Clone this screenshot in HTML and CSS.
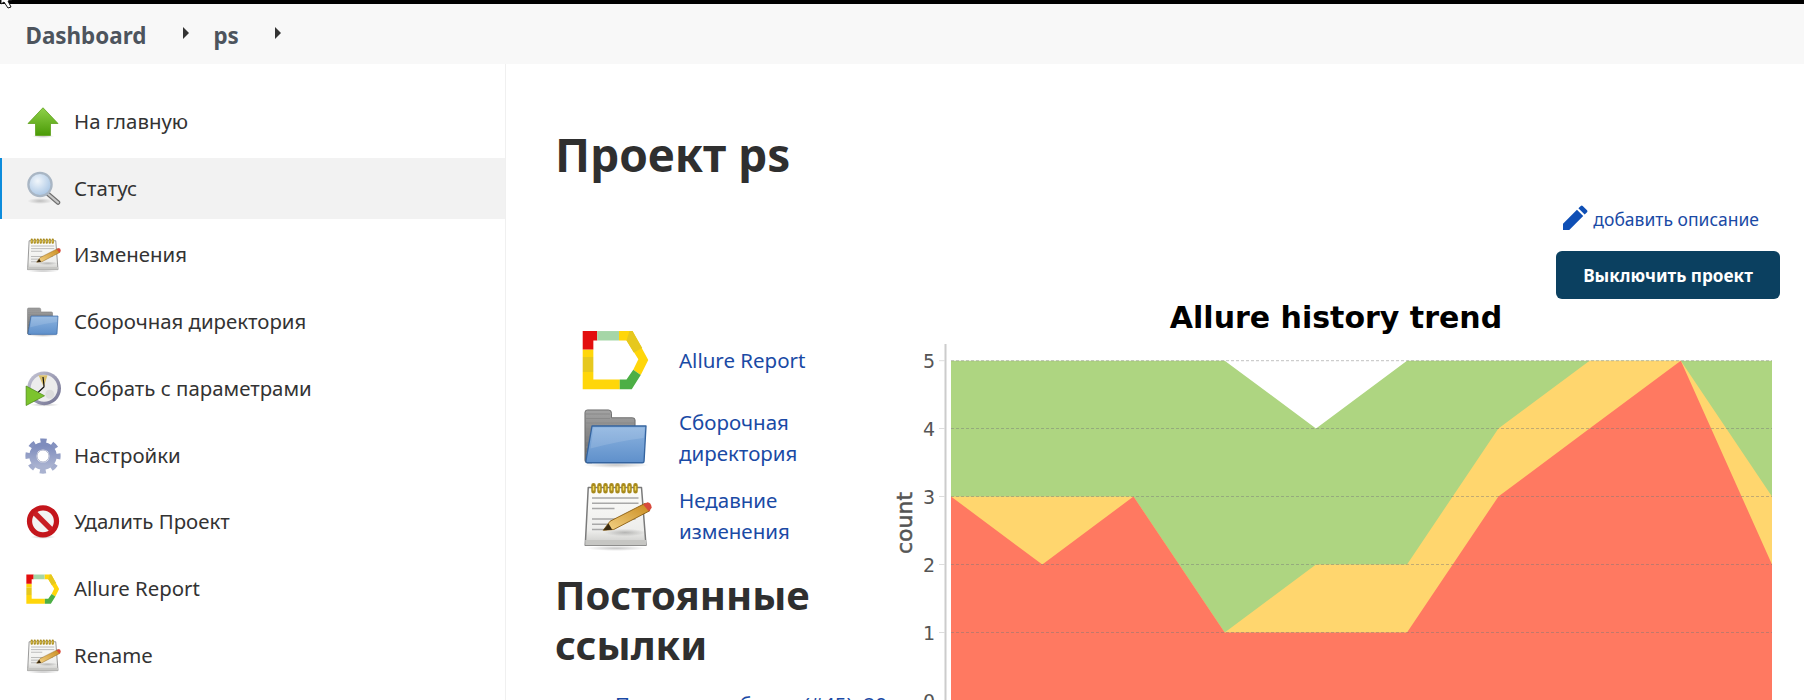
FILE: index.html
```html
<!DOCTYPE html>
<html lang="ru">
<head>
<meta charset="utf-8">
<title>Проект ps</title>
<link rel="stylesheet" href="styles.css">
</head>
<body>
<svg class="sprite" aria-hidden="true">
  <defs>
    <linearGradient id="g-arrow" x1="0" y1="0" x2="0" y2="1"><stop offset="0" stop-color="#8fd14a"/><stop offset="1" stop-color="#4a9a06"/></linearGradient>
    <linearGradient id="g-paper" x1="0" y1="0" x2="0" y2="1"><stop offset="0" stop-color="#fdfdfb"/><stop offset=".75" stop-color="#ededeb"/><stop offset="1" stop-color="#c9c9c6"/></linearGradient>
    <linearGradient id="g-pencil" x1="0" y1="1" x2="1" y2="0"><stop offset="0" stop-color="#f4d58a"/><stop offset="1" stop-color="#c98a1c"/></linearGradient>
    <linearGradient id="g-folder" x1="0" y1="0" x2="0" y2="1"><stop offset="0" stop-color="#8db4e0"/><stop offset="1" stop-color="#5f90cb"/></linearGradient>
    <linearGradient id="g-back" x1="0" y1="0" x2="0" y2="1"><stop offset="0" stop-color="#a3a3a3"/><stop offset="1" stop-color="#666"/></linearGradient>
    <radialGradient id="g-lens" cx=".4" cy=".35" r=".7"><stop offset="0" stop-color="#f1f6fb"/><stop offset="1" stop-color="#a5c3e3"/></radialGradient>
    <linearGradient id="g-clock" x1="0" y1="0" x2="1" y2="1"><stop offset="0" stop-color="#c9c9d8"/><stop offset="1" stop-color="#6e6e8e"/></linearGradient>
    <linearGradient id="g-gear" x1="0" y1="0" x2="0" y2="1"><stop offset="0" stop-color="#7f8dbd"/><stop offset="1" stop-color="#a9b2d0"/></linearGradient>
    <radialGradient id="g-shadow"><stop offset="0" stop-color="#000" stop-opacity=".22"/><stop offset="1" stop-color="#000" stop-opacity="0"/></radialGradient>

    <symbol id="i-up" viewBox="0 0 48 48">
      <ellipse cx="24" cy="43" rx="15" ry="2.5" fill="url(#g-shadow)"/>
      <path d="M24 5 44 26H34V42H14V26H4Z" fill="url(#g-arrow)" stroke="#5a9e14" stroke-width="1"/>
    </symbol>
    <symbol id="i-search" viewBox="0 0 48 48">
      <ellipse cx="20" cy="40" rx="17" ry="4" fill="url(#g-shadow)"/>
      <path d="M30 30 44 42" stroke="#6f6f6f" stroke-width="6" stroke-linecap="round"/>
      <path d="M30 30 44 42" stroke="#c8c8c8" stroke-width="3" stroke-linecap="round"/>
      <circle cx="20" cy="18" r="15.5" fill="url(#g-lens)" stroke="#a9b6c4" stroke-width="3"/>
    </symbol>
    <symbol id="i-notes" viewBox="0 0 48 48">
      <ellipse cx="24" cy="45.500" rx="20" ry="1.800" fill="url(#g-shadow)"/>
      <path d="M5.500 5H41L44 43.500H3.500Z" fill="url(#g-paper)" stroke="#7a7a7a" stroke-linejoin="round"/>
      <path d="M3.500 40H44V43.500H3.500Z" fill="#c6c6c3"/>
      <path d="M9 3.500V7.500M13 3.500V7.500M17 3.500V7.500M21 3.500V7.500M25 3.500V7.500M29 3.500V7.500M33 3.500V7.500M37 3.500V7.500" stroke="#a88a1c" stroke-width="3" stroke-linecap="round"/>
      <path d="M9 4V7M13 4V7M17 4V7M21 4V7M25 4V7M29 4V7M33 4V7M37 4V7" stroke="#f0d85a" stroke-width="1"/>
      <path d="M8 12H39M8 15.500H39M8 19H23M8 26H37M8 29.500H28M8 33H18" stroke="#a8a8a8" stroke-width="1"/>
      <ellipse cx="30" cy="35" rx="14" ry="2.500" fill="url(#g-shadow)"/>
      <path d="M15.500 33.500 20 27.500 43.500 15.500 46.500 20.500 22.500 33Z" fill="url(#g-pencil)" stroke="#8a5c10" stroke-width=".6"/>
      <path d="M15.500 33.500 19 29 21.500 33.200Z" fill="#3a2b12"/>
      <path d="M42 16.300 45 14.800Q47.500 15 47.800 18.500L46 21Z" fill="#d84a3c"/>
    </symbol>
    <symbol id="i-folder" viewBox="0 0 48 48">
      <ellipse cx="24" cy="42" rx="22" ry="2" fill="url(#g-shadow)"/>
      <path d="M3.300 7Q3.300 5.300 5 5.300H19Q21 5.300 21 7.500V10.500H35Q36.700 10.500 36.700 12V20H8V40.500H5Q3.300 40.500 3.300 39Z" fill="url(#g-back)" stroke="#666" stroke-width=".6"/>
      <path d="M4 8H20M4 11H20M4 14H36M4 18H36M4 22H7M4 26H7M4 30H6M4 34H6" stroke="#8a8a8a" stroke-width=".7" fill="none"/>
      <path d="M8 16H44L42.700 39.500Q42.700 40.500 41.500 40.500H5Q3.800 40.500 4 39Z" fill="url(#g-folder)" stroke="#35649f" stroke-width=".9" stroke-linejoin="round"/>
      <path d="M9 17.200H43L42.500 24Q26 26 7 31Z" fill="#fff" opacity=".13"/>
    </symbol>
    <symbol id="i-build" viewBox="0 0 48 48">
      <ellipse cx="26" cy="45" rx="20" ry="2.500" fill="url(#g-shadow)"/>
      <circle cx="25.500" cy="23" r="22.500" fill="url(#g-clock)"/>
      <circle cx="25.500" cy="23" r="18" fill="#ececec"/>
      <path d="M25 21 18 5.500H30Z" fill="#d8be6a"/>
      <path d="M25.500 21 24 8M25.500 21 17 29" stroke="#111" stroke-width="1.600" fill="none"/>
      <circle cx="33" cy="31" r="6" fill="#d6d6d6" opacity=".7"/>
      <path d="M1.500 20 26 33 1.500 46Z" fill="#7cc42d" stroke="#4c8a14"/>
    </symbol>
    <symbol id="i-gear" viewBox="0 0 48 48">
      <circle cx="24" cy="24" r="19.500" fill="none" stroke="url(#g-gear)" stroke-width="8" stroke-dasharray="7.800 7.515" stroke-dashoffset="3.900"/>
      <circle cx="24" cy="24" r="13.500" fill="none" stroke="url(#g-gear)" stroke-width="9.500"/>
      <circle cx="24" cy="24" r="8" fill="#fff" stroke="#7a84ab" stroke-width=".8"/>
    </symbol>
    <symbol id="i-stop" viewBox="0 0 48 48">
      <ellipse cx="24" cy="44" rx="17" ry="2.500" fill="url(#g-shadow)"/>
      <circle cx="24" cy="23" r="18" fill="#f3f3f3" stroke="#c4161c" stroke-width="7"/>
      <path d="M12.500 11.500 35.500 34.500" stroke="#c81e24" stroke-width="7"/>
    </symbol>
    <symbol id="i-allure" viewBox="0 0 48 48">
      <path d="M1.800 17H8.900V22H1.800ZM1.800 32H8.900V37H26.500V43.500H1.800ZM26 4.700H35L45.500 24 40.500 34 35.500 30.500 38.900 23.500 31 11H26Z" fill="#ffd60a"/>
      <path d="M1.800 22H8.900V32H1.800ZM33 4.700 35 4.700 41.500 16 35.800 19 31 11Z" fill="#e6c81e"/>
      <path d="M1.800 4.700H11.500V11H8.900V17H1.800Z" fill="#e30e0e"/>
      <path d="M11.500 4.700H26V11H11.500Z" fill="#a5d6a7"/>
      <path d="M26.500 37H31L35.500 30.500 40.500 34 34.500 43.500H26.500Z" fill="#4caf45"/>
    </symbol>
  </defs>
</svg>

<svg class="cursor" viewBox="0 0 14 10" aria-hidden="true"><path d="M1-4 1 4 4 2 8 8 11 7 8 1 12 0Z" fill="#fff" stroke="#111" stroke-width="1"/></svg>

<div class="topline"></div>
<header class="crumbs">
  <a class="crumb">Dashboard</a><span class="caret"></span>
  <a class="crumb crumb-ps">ps</a><span class="caret"></span>
</header>

<div class="layout">
  <nav class="side">
    <a class="side-item"><svg class="side-icon"><use href="#i-up"/></svg><span>На главную</span></a>
    <a class="side-item active"><svg class="side-icon"><use href="#i-search"/></svg><span>Статус</span></a>
    <a class="side-item"><svg class="side-icon"><use href="#i-notes"/></svg><span>Изменения</span></a>
    <a class="side-item"><svg class="side-icon"><use href="#i-folder"/></svg><span>Сборочная директория</span></a>
    <a class="side-item"><svg class="side-icon"><use href="#i-build"/></svg><span>Собрать с параметрами</span></a>
    <a class="side-item"><svg class="side-icon"><use href="#i-gear"/></svg><span>Настройки</span></a>
    <a class="side-item"><svg class="side-icon"><use href="#i-stop"/></svg><span>Удалить Проект</span></a>
    <a class="side-item"><svg class="side-icon"><use href="#i-allure"/></svg><span>Allure Report</span></a>
    <a class="side-item"><svg class="side-icon"><use href="#i-notes"/></svg><span>Rename</span></a>
  </nav>

  <main class="main">
    <h1 class="title">Проект ps</h1>
    <div class="desc-row">
      <a class="desc-link">
        <svg class="pencil" viewBox="0 0 26 26"><path d="M0 26V19.500L14.500 5 21 11.500 6.500 26ZM16 3.500 18.500 1Q19.500 0 20.500 1L25 5.500Q26 6.500 25 7.500L22.500 10Z" fill="#0f4fb5"/></svg>
        <span>добавить описание</span>
      </a>
    </div>
    <div class="btn-row"><button class="btn">Выключить проект</button></div>

    <div class="content">
      <div class="left">
        <ul class="links">
          <li class="link-row"><svg class="link-icon"><use href="#i-allure"/></svg><a class="link">Allure Report</a></li>
          <li class="link-row"><svg class="link-icon"><use href="#i-folder"/></svg><a class="link">Сборочная директория</a></li>
          <li class="link-row"><svg class="link-icon"><use href="#i-notes"/></svg><a class="link">Недавние изменения</a></li>
        </ul>
        <h2 class="perma">Постоянные ссылки</h2>
        <ul class="perma-list">
          <li><a class="link">Последняя сборка (#45), 20 час назад</a></li>
        </ul>
      </div>

      <svg class="chart" viewBox="890 300 890 420" width="890" height="420">
        <text class="chart-title" x="1336" y="328" text-anchor="middle">Allure history trend</text>
        <path class="area-green" d="M951 360.700H1224.700L1316 428.500 1407 360.700H1772V720H951Z"/>
        <path class="area-yellow" d="M951 496.500H1133.500L1224.700 632.500 1316 564.500H1407L1498.400 428.500 1589.600 360.700H1680.800L1772 496.500V720H951Z"/>
        <path class="area-red" d="M951 496.500 1042.300 564.500 1133.500 496.500 1224.700 632.500H1407L1498.400 496.500 1589.600 428.500 1680.800 360.700 1772 564.500V720H951Z"/>
        <path class="grid" d="M951 360.700H1772M951 428.500H1772M951 496.500H1772M951 564.500H1772M951 632.500H1772"/>
        <path class="axis" d="M945.500 344V720"/>
        <path class="tick" d="M939 360.700H945M939 428.500H945M939 496.500H945M939 564.500H945M939 632.500H945M939 700.500H945"/>
        <g class="y-labels">
          <text x="935" y="367.500">5</text>
          <text x="935" y="435.500">4</text>
          <text x="935" y="503.500">3</text>
          <text x="935" y="571.500">2</text>
          <text x="935" y="639.500">1</text>
          <text x="935" y="707.500">0</text>
        </g>
        <text class="y-title" transform="translate(912 523) rotate(-90)" text-anchor="middle">count</text>
      </svg>
    </div>
  </main>
</div>
</body>
</html>
```
FILE: styles.css
```css
* { box-sizing: border-box; }
html, body { margin: 0; height: 700px; overflow: hidden; background: #fff; }
body {
  font-family: "Noto Sans", "Open Sans", sans-serif;
  color: #333;
  display: flex;
  flex-direction: column;
  position: relative;
}
.sprite { position: absolute; width: 0; height: 0; }
.cursor { position: absolute; left: 0; top: 0; width: 14px; height: 10px; z-index: 2; }
.topline { height: 4px; background: #000; flex: none; }

.crumbs {
  height: 60px;
  flex: none;
  background: #f8f8f8;
  display: flex;
  align-items: center;
  padding-left: 25.5px;
  color: #4d545d;
  font-size: 22.4px;
  font-weight: 700;
}
.crumb { margin-top: 2px; }
.crumb-ps { margin-left: 24px; }
.caret {
  margin-left: 37px;
  margin-top: -3px;
  width: 0;
  height: 0;
  border-left: 6px solid #333;
  border-top: 6px solid transparent;
  border-bottom: 6px solid transparent;
}
.crumb-ps + .caret { margin-left: 36px; }

.layout { flex: 1; display: flex; min-height: 0; }

.side {
  width: 506px;
  flex: none;
  border-right: 1px solid #f0f0f0;
  padding-top: 27.25px;
  display: flex;
  flex-direction: column;
  gap: 5.75px;
}
.side-item {
  height: 61px;
  flex: none;
  display: flex;
  align-items: center;
  gap: 13px;
  padding-left: 25px;
  font-size: 20.4px;
  color: #333;
}
.side-item span { margin-top: -2px; }
.side-item.active { background: #f2f2f2; box-shadow: inset 2px 0 0 #0d8cdc; }
.side-icon { width: 36px; height: 36px; flex: none; }

.main { flex: 1; min-width: 0; padding: 65px 24px 0 49px; }
.title { margin: 0; font-size: 46px; line-height: 50px; font-weight: 700; color: #2f2f2f; }
.desc-row { margin-top: 25px; height: 30px; display: flex; justify-content: flex-end; padding-right: 21px; }
.desc-link { display: flex; align-items: center; gap: 5px; color: #1a4aa5; font-size: 17.5px; }
.pencil { width: 25px; height: 25px; margin-top: -3px; }
.btn-row { margin-top: 17px; display: flex; justify-content: flex-end; }
.btn {
  width: 224px;
  height: 48px;
  border: 0;
  border-radius: 6px;
  background: #0b4060;
  color: #fff;
  font: 700 17.2px "Noto Sans", sans-serif;
}

.content { margin-top: 1px; display: flex; }
.left { width: 335px; flex: none; padding-top: 21px; }
.links { list-style: none; margin: 0; padding: 0 0 0 25px; }
.link-row { height: 78px; display: flex; align-items: center; gap: 27px; }
.link-icon { width: 72px; height: 72px; flex: none; }
.link { color: #1a4aa5; font-size: 20.5px; line-height: 31px; }
.link-row .link { width: 140px; }
.perma { margin: 15px 0 0; font-size: 40px; line-height: 50px; font-weight: 700; color: #2f2f2f; }
.perma-list { margin: 19px 0 0; padding-left: 60px; list-style: none; }

.chart { flex: none; display: block; }
.chart-title { font: 700 30px "DejaVu Sans", sans-serif; fill: #000; }
.area-green { fill: #aed581; }
.area-yellow { fill: #ffd66e; }
.area-red { fill: #ff7961; }
.grid { fill: none; stroke: #777; stroke-opacity: .45; stroke-width: 1; stroke-dasharray: 3 2; }
.axis { fill: none; stroke: #ccc; stroke-width: 2; }
.tick { fill: none; stroke: #ddd; stroke-width: 1; }
.y-labels text { font: 19px "DejaVu Sans", sans-serif; fill: #555; text-anchor: end; }
.y-title { font: 22px "DejaVu Sans", sans-serif; fill: #555; stroke: #555; stroke-width: .5px; }
```
